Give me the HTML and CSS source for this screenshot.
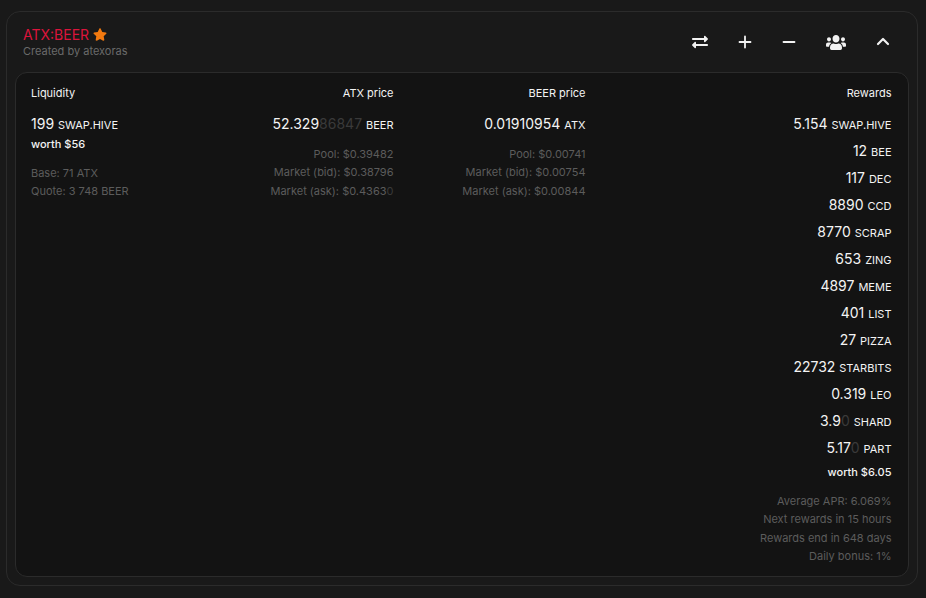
FILE: index.html
```html
<!DOCTYPE html>
<html lang="en">
<head>
<meta charset="utf-8">
<title>ATX:BEER</title>
<link rel="stylesheet" href="styles.css">
</head>
<body>
<section class="card">
  <header class="head">
    <div class="title-block">
      <div class="title">ATX:BEER
        <svg class="star" viewBox="0 0 576 512"><path fill="currentColor" d="M259.3 17.8L194 150.2 47.9 171.5c-26.2 3.8-36.7 36.1-17.7 54.6l105.7 103-25 145.5c-4.5 26.3 23.2 46 46.4 33.7L288 439.6l130.7 68.7c23.2 12.2 50.9-7.4 46.4-33.7l-25-145.5 105.7-103c19-18.5 8.5-50.8-17.7-54.6L382 150.2 316.7 17.8c-11.7-23.6-45.6-23.9-57.4 0z"/></svg>
      </div>
      <div class="creator">Created by atexoras</div>
    </div>
    <div class="actions">
      <svg class="ico ico-swap" viewBox="0 0 512 512"><path fill="currentColor" d="M0 168v-16c0-13.255 10.745-24 24-24h360V80c0-21.367 25.899-32.042 40.971-16.971l80 80c9.372 9.373 9.372 24.569 0 33.941l-80 80C409.956 271.982 384 261.456 384 240v-48H24c-13.255 0-24-10.745-24-24zm488 152H128v-48c0-21.314-25.862-32.08-40.971-16.971l-80 80c-9.372 9.373-9.372 24.569 0 33.941l80 80C102.057 463.997 128 453.437 128 432v-48h360c13.255 0 24-10.745 24-24v-16c0-13.255-10.745-24-24-24z"/></svg>
      <svg class="ico ico-small" viewBox="0 0 14 16"><path fill="none" stroke="currentColor" stroke-width="1.8" stroke-linecap="round" d="M7 2.5v11M1.5 8h11"/></svg>
      <svg class="ico ico-small" viewBox="0 0 14 16"><path fill="none" stroke="currentColor" stroke-width="1.8" stroke-linecap="round" d="M1.5 8h11"/></svg>
      <svg class="ico ico-users" viewBox="0 0 640 512" preserveAspectRatio="none"><path fill="currentColor" d="M96 224c35.3 0 64-28.7 64-64s-28.7-64-64-64-64 28.7-64 64 28.7 64 64 64zm448 0c35.3 0 64-28.7 64-64s-28.7-64-64-64-64 28.7-64 64 28.7 64 64 64zm32 32h-64c-17.6 0-33.5 7.1-45.1 18.6 40.3 22.1 68.9 62 75.1 109.4h66c17.7 0 32-14.3 32-32v-32c0-35.3-28.7-64-64-64zm-256 0c61.9 0 112-50.1 112-112S381.9 32 320 32 208 82.1 208 144s50.1 112 112 112zm76.8 32h-8.3c-20.8 10-43.9 16-68.5 16s-47.6-6-68.5-16h-8.3C179.6 288 128 339.6 128 403.2V432c0 26.5 21.5 48 48 48h288c26.5 0 48-21.5 48-48v-28.8c0-63.6-51.6-115.2-115.2-115.2zm-223.7-13.4C161.5 263.1 145.6 256 128 256H64c-35.3 0-64 28.7-64 64v32c0 17.7 14.3 32 32 32h65.9c6.3-47.4 34.9-87.3 75.2-109.4z"/></svg>
      <svg class="ico ico-small" viewBox="0 0 14 16"><path fill="none" stroke="currentColor" stroke-width="2.2" stroke-linecap="round" stroke-linejoin="round" d="M2 10l5-5 5 5"/></svg>
    </div>
  </header>
  <div class="panel">
    <div class="col">
      <div class="label">Liquidity</div>
      <div class="val first">199 <span class="unit">SWAP.HIVE</span></div>
      <div class="worth">worth $56</div>
      <div class="notes">
        <div>Base: 71 ATX</div>
        <div>Quote: 3 748 BEER</div>
      </div>
    </div>
    <div class="col end">
      <div class="label">ATX price</div>
      <div class="val first">52.329<span class="ghost">86847</span> <span class="unit">BEER</span></div>
      <div class="notes notes-gap">
        <div>Pool: $0.39482</div>
        <div>Market (bid): $0.38796</div>
        <div>Market (ask): $0.4363<span class="ghost">0</span></div>
      </div>
    </div>
    <div class="col end">
      <div class="label">BEER price</div>
      <div class="val first">0.01910954 <span class="unit">ATX</span></div>
      <div class="notes notes-gap">
        <div>Pool: $0.00741</div>
        <div>Market (bid): $0.00754</div>
        <div>Market (ask): $0.00844</div>
      </div>
    </div>
    <div class="col end">
      <div class="label">Rewards</div>
      <div class="val first">5.154 <span class="unit">SWAP.HIVE</span></div>
      <div class="val">12 <span class="unit">BEE</span></div>
      <div class="val">117 <span class="unit">DEC</span></div>
      <div class="val">8890 <span class="unit">CCD</span></div>
      <div class="val">8770 <span class="unit">SCRAP</span></div>
      <div class="val">653 <span class="unit">ZING</span></div>
      <div class="val">4897 <span class="unit">MEME</span></div>
      <div class="val">401 <span class="unit">LIST</span></div>
      <div class="val">27 <span class="unit">PIZZA</span></div>
      <div class="val">22732 <span class="unit">STARBITS</span></div>
      <div class="val">0.319 <span class="unit">LEO</span></div>
      <div class="val">3.9<span class="ghost">0</span> <span class="unit">SHARD</span></div>
      <div class="val">5.17<span class="ghost">0</span> <span class="unit">PART</span></div>
      <div class="worth worth-gap">worth $6.05</div>
      <div class="notes">
        <div>Average APR: 6.069%</div>
        <div>Next rewards in 15 hours</div>
        <div>Rewards end in 648 days</div>
        <div>Daily bonus: 1%</div>
      </div>
    </div>
  </div>
</section>
</body>
</html>
```

FILE: styles.css
```css
* { box-sizing: border-box; }
html, body { height: 100%; }
body {
  margin: 0;
  padding: 11px 8px 12px 6px;
  background: #191919;
  color: #fff;
  font-family: Inter, "Liberation Sans", sans-serif;
  font-size: 11px;
  overflow: hidden;
}
.card {
  height: 575px;
  padding: 0 8px 8px;
  background: #191919;
  border: 1px solid #2b2b2b;
  border-radius: 14px;
  display: flex;
  flex-direction: column;
}
.head {
  height: 60px;
  flex: none;
  display: flex;
  align-items: flex-start;
  justify-content: space-between;
  padding: 13px 19px 0 8px;
}
.title {
  display: flex;
  align-items: center;
  gap: 4px;
  color: #dc143c;
  font-size: 14px;
  line-height: 19px;
}
.star { width: 14px; height: 13px; color: #f2790f; margin-top: -1px; }
.creator { color: #6a6a6a; font-size: 11px; line-height: 14px; }
.actions {
  display: flex;
  align-items: center;
  gap: 30px;
  height: 34px;
  color: #f2f2f2;
}
.ico { height: 16px; display: block; }
.ico-swap { width: 16px; }
.ico-small { width: 14px; }
.ico-users { width: 20px; height: 17px; }
.panel {
  flex: 1;
  min-height: 0;
  display: grid;
  grid-template-columns: 170.5px 192px 192px 1fr;
  align-items: start;
  padding: 13px 16.5px 0 15px;
  background: #131313;
  border: 1px solid #2b2b2b;
  border-radius: 12px;
}
.col.end { text-align: right; }
.label { line-height: 15px; color: #f4f4f4; }
.val {
  font-size: 14px;
  line-height: 27px;
  color: #f4f4f4;
}
.val.first { margin-top: 9px; }
.unit { font-size: 11px; line-height: 1; }
.ghost { color: #3a3a3a; }
.worth { line-height: 14px; font-weight: 500; color: #f4f4f4; }
.worth-gap { margin-top: 4px; }
.notes {
  margin-top: 13px;
  color: #5c5c5c;
  line-height: 18.3px;
}
.notes-gap { margin-top: 8px; }
```
